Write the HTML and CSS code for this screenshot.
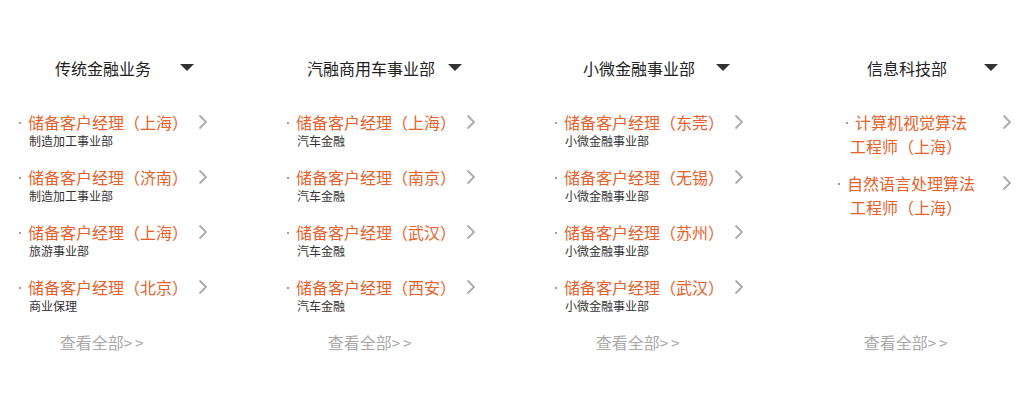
FILE: index.html
```html
<!DOCTYPE html>
<html lang="zh-CN">
<head>
<meta charset="utf-8">
<title>职位</title>
<link rel="stylesheet" href="styles.css">
</head>
<body>
<div class="board">
  <section class="col">
    <h3 class="head">传统金融业务<i class="tri"></i></h3>
    <ul class="list">
      <li class="item"><p class="title"><span class="dot"></span>储备客户经理（上海）</p><p class="sub">制造加工事业部</p><svg class="chev" viewBox="0 0 10 16"><polyline points="1.5,1.5 8,8 1.5,14.5"/></svg></li>
      <li class="item"><p class="title"><span class="dot"></span>储备客户经理（济南）</p><p class="sub">制造加工事业部</p><svg class="chev" viewBox="0 0 10 16"><polyline points="1.5,1.5 8,8 1.5,14.5"/></svg></li>
      <li class="item"><p class="title"><span class="dot"></span>储备客户经理（上海）</p><p class="sub">旅游事业部</p><svg class="chev" viewBox="0 0 10 16"><polyline points="1.5,1.5 8,8 1.5,14.5"/></svg></li>
      <li class="item"><p class="title"><span class="dot"></span>储备客户经理（北京）</p><p class="sub">商业保理</p><svg class="chev" viewBox="0 0 10 16"><polyline points="1.5,1.5 8,8 1.5,14.5"/></svg></li>
    </ul>
    <a class="more" href="#">查看全部<span class="gt">&gt;&gt;</span></a>
  </section>
  <section class="col">
    <h3 class="head">汽融商用车事业部<i class="tri"></i></h3>
    <ul class="list">
      <li class="item"><p class="title"><span class="dot"></span>储备客户经理（上海）</p><p class="sub">汽车金融</p><svg class="chev" viewBox="0 0 10 16"><polyline points="1.5,1.5 8,8 1.5,14.5"/></svg></li>
      <li class="item"><p class="title"><span class="dot"></span>储备客户经理（南京）</p><p class="sub">汽车金融</p><svg class="chev" viewBox="0 0 10 16"><polyline points="1.5,1.5 8,8 1.5,14.5"/></svg></li>
      <li class="item"><p class="title"><span class="dot"></span>储备客户经理（武汉）</p><p class="sub">汽车金融</p><svg class="chev" viewBox="0 0 10 16"><polyline points="1.5,1.5 8,8 1.5,14.5"/></svg></li>
      <li class="item"><p class="title"><span class="dot"></span>储备客户经理（西安）</p><p class="sub">汽车金融</p><svg class="chev" viewBox="0 0 10 16"><polyline points="1.5,1.5 8,8 1.5,14.5"/></svg></li>
    </ul>
    <a class="more" href="#">查看全部<span class="gt">&gt;&gt;</span></a>
  </section>
  <section class="col">
    <h3 class="head">小微金融事业部<i class="tri"></i></h3>
    <ul class="list">
      <li class="item"><p class="title"><span class="dot"></span>储备客户经理（东莞）</p><p class="sub">小微金融事业部</p><svg class="chev" viewBox="0 0 10 16"><polyline points="1.5,1.5 8,8 1.5,14.5"/></svg></li>
      <li class="item"><p class="title"><span class="dot"></span>储备客户经理（无锡）</p><p class="sub">小微金融事业部</p><svg class="chev" viewBox="0 0 10 16"><polyline points="1.5,1.5 8,8 1.5,14.5"/></svg></li>
      <li class="item"><p class="title"><span class="dot"></span>储备客户经理（苏州）</p><p class="sub">小微金融事业部</p><svg class="chev" viewBox="0 0 10 16"><polyline points="1.5,1.5 8,8 1.5,14.5"/></svg></li>
      <li class="item"><p class="title"><span class="dot"></span>储备客户经理（武汉）</p><p class="sub">小微金融事业部</p><svg class="chev" viewBox="0 0 10 16"><polyline points="1.5,1.5 8,8 1.5,14.5"/></svg></li>
    </ul>
    <a class="more" href="#">查看全部<span class="gt">&gt;&gt;</span></a>
  </section>
  <section class="col">
    <h3 class="head">信息科技部<i class="tri"></i></h3>
    <ul class="list">
      <li class="item item-wide"><p class="title"><span class="dot"></span>计算机视觉算法<br>工程师（上海）</p><svg class="chev" viewBox="0 0 10 16"><polyline points="1.5,1.5 8,8 1.5,14.5"/></svg></li>
      <li class="item item-wide"><p class="title"><span class="dot"></span>自然语言处理算法<br>工程师（上海）</p><svg class="chev" viewBox="0 0 10 16"><polyline points="1.5,1.5 8,8 1.5,14.5"/></svg></li>
    </ul>
    <a class="more" href="#">查看全部<span class="gt">&gt;&gt;</span></a>
  </section>
</div>
</body>
</html>
```

FILE: styles.css
```css
* { box-sizing: border-box; }
html, body { margin: 0; padding: 0; background: #fff; }
body {
  font-family: "Microsoft YaHei", "Noto Sans CJK SC", "Noto Sans", sans-serif;
  color: #222;
}
.board {
  display: flex;
  padding-top: 56px;
}
.col {
  flex: 0 0 268px;
  width: 268px;
}
.head {
  position: relative;
  width: 206px;
  margin: 0;
  font-size: 16px;
  font-weight: normal;
  line-height: 24px;
  text-align: center;
  color: #222;
}
.tri {
  position: absolute;
  left: 180px;
  top: 8px;
  width: 0;
  height: 0;
  border-left: 7px solid transparent;
  border-right: 7px solid transparent;
  border-top: 7px solid #333;
}
.list {
  list-style: none;
  margin: 30px 0 0;
  padding: 0;
  height: 220px;
}
.item {
  position: relative;
  width: 172px;
  margin: 0 0 16px 17px;
}
.item-wide {
  width: 140px;
  margin: 0 0 13px 32px;
}
.title {
  margin: 0;
  font-size: 16px;
  line-height: 24px;
  color: #e6612b;
  text-align: center;
}
.dot {
  display: inline-block;
  width: 10px;
  height: 24px;
  vertical-align: top;
  background: linear-gradient(#b89484, #b89484) no-repeat 1px 12px / 2px 2px;
}
.sub {
  margin: -1px 0 0 12px;
  font-size: 12px;
  line-height: 16px;
  color: #333;
}
.chev {
  position: absolute;
  left: 181px;
  top: 4px;
  width: 10px;
  height: 16px;
  fill: none;
  stroke: #aaa;
  stroke-width: 1.8;
}
.item-wide .chev { left: 166px; }
.more {
  display: block;
  width: 206px;
  font-size: 16px;
  line-height: 24px;
  text-align: center;
  color: #aaa;
  text-decoration: none;
}
.gt {
  letter-spacing: 3px;
  font-size: 15px;
}
```
